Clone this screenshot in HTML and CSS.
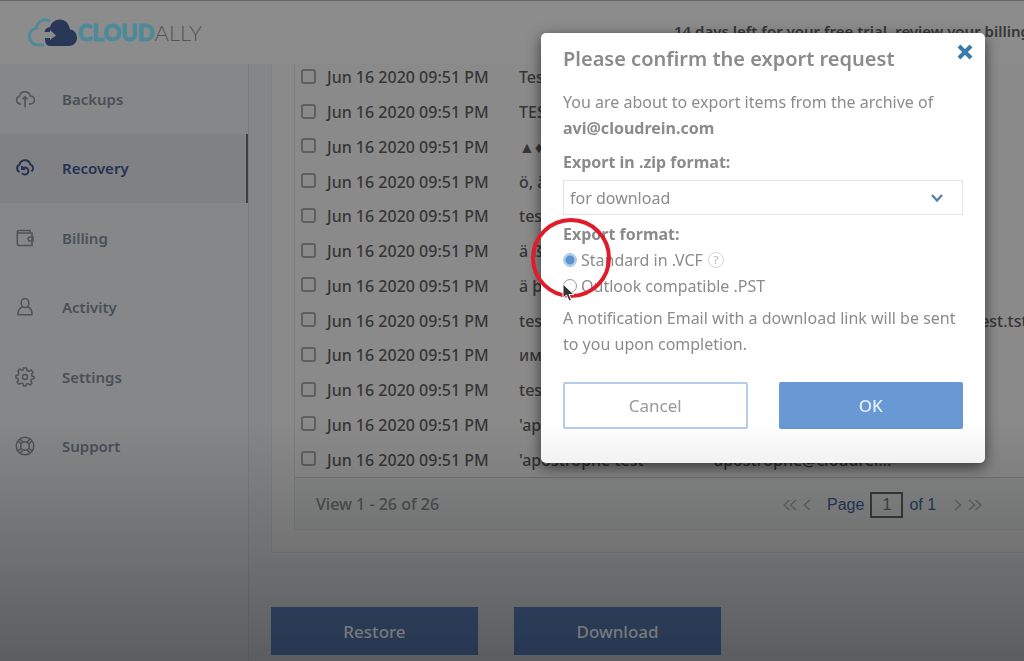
FILE: index.html
```html
<!DOCTYPE html>
<html lang="en">
<head>
    <meta charset="UTF-8">
    <meta name="viewport" content="width=device-width, initial-scale=1.0">
    <title>CloudAlly - Recovery</title>
    <link rel="stylesheet" href="styles.css">
</head>
<body>
    <header class="topbar">
        <a href="#" class="logo" aria-label="CloudAlly">
            <svg width="50" height="30" viewBox="0 0 50 30">
                <path d="M22 3C15 0 9 4 8.500 10C3 11.500 1 15 1.500 19C2 24 6 27 10 27H16" fill="none" stroke="#4d8a99" stroke-width="2.800"/>
                <path d="M21 28H41C46 28 49 24 49 20C49 15 46 12 42 11.500C41 5 37 1.500 32 1.500C27 1.500 23 5 22 9C19 9.500 17 11 16.500 14H22V12L28 17.500L22 22V20H17C17 25 18 27 21 28Z" fill="#2a3858"/>
            </svg>
            <span class="logo-cloud">CLOUD</span><span class="logo-ally">ALLY</span>
        </a>
        <p class="trial">14 days left for your free trial, review your billing</p>
    </header>
    <div class="layout">
        <nav class="sidebar">
            <a href="#"><svg viewBox="0 0 20 20"><path d="M6 15H5A4 4 0 0 1 4.500 7.200A5.500 5.500 0 0 1 15.300 7A4 4 0 0 1 15.500 15H14M10 18.500V8M7.500 10.200L10 7.800L12.500 10.200"/></svg>Backups</a>
            <a href="#" class="active"><svg viewBox="0 0 20 20"><path d="M4.500 14A4 4 0 0 1 4.500 6.700A5.500 5.500 0 0 1 15.300 6.500A4 4 0 0 1 16.500 13.500M7 8V11H10M7.200 10.800A3.500 3.500 0 1 1 7 15"/></svg>Recovery</a>
            <a href="#"><svg viewBox="0 0 20 20"><path d="M3.500 2.500H15V5H3.500A1.200 1.200 0 0 1 3.500 2.500ZM2.300 4V16A1.500 1.500 0 0 0 4 17.500H17V5H15M18 9H15A2 2 0 0 0 15 13H18Z"/></svg>Billing</a>
            <a href="#"><svg viewBox="0 0 20 20"><ellipse cx="10" cy="6" rx="3.800" ry="4.500"/><path d="M7.500 10C4 11.500 3 13 3 17.800H17C17 13 16 11.500 12.500 10"/></svg>Activity</a>
            <a href="#"><svg viewBox="0 0 20 20"><path d="M8.500 1H11.500L12 3.500L14 4.400L16.200 3L18 5.200L16.500 7.500L17 9L19 9.500V11.500L16.800 12L16 14L17 16L15 18L13 16.500L11.500 17L11 19H8.500L8 16.800L6 16L4 17.200L2 15L3.500 13L3 11.500L1 11V8.500L3.300 8L4 6L2.800 4L5 2L7 3.500L8 3.200Z"/><circle cx="10" cy="10" r="2.500"/></svg>Settings</a>
            <a href="#"><svg viewBox="0 0 20 20"><circle cx="10" cy="10" r="8.800"/><circle cx="10" cy="10" r="4.300"/><path d="M3 5L6.300 8M5 3L8 6.300M17 5L13.700 8M15 3L12 6.300M3 15L6.300 12M5 17L8 13.700M17 15L13.700 12M15 17L12 13.700"/></svg>Support</a>
        </nav>
        <main class="content">
            <section class="card">
                <div class="grid">
                    <div class="rows">
                        <table>
                            <tr><td><input type="checkbox" aria-label="Select row"></td><td>Jun 16 2020 09:51 PM</td><td>Test</td><td></td><td></td></tr>
                            <tr><td><input type="checkbox" aria-label="Select row"></td><td>Jun 16 2020 09:51 PM</td><td>TEST</td><td></td><td></td></tr>
                            <tr><td><input type="checkbox" aria-label="Select row"></td><td>Jun 16 2020 09:51 PM</td><td>▲♦</td><td></td><td></td></tr>
                            <tr><td><input type="checkbox" aria-label="Select row"></td><td>Jun 16 2020 09:51 PM</td><td>ö, ä</td><td></td><td></td></tr>
                            <tr><td><input type="checkbox" aria-label="Select row"></td><td>Jun 16 2020 09:51 PM</td><td>test</td><td></td><td></td></tr>
                            <tr><td><input type="checkbox" aria-label="Select row"></td><td>Jun 16 2020 09:51 PM</td><td>ä ß</td><td></td><td></td></tr>
                            <tr><td><input type="checkbox" aria-label="Select row"></td><td>Jun 16 2020 09:51 PM</td><td>ä þ</td><td></td><td></td></tr>
                            <tr><td><input type="checkbox" aria-label="Select row"></td><td>Jun 16 2020 09:51 PM</td><td>test</td><td></td><td>test.tst</td></tr>
                            <tr><td><input type="checkbox" aria-label="Select row"></td><td>Jun 16 2020 09:51 PM</td><td>имя</td><td></td><td></td></tr>
                            <tr><td><input type="checkbox" aria-label="Select row"></td><td>Jun 16 2020 09:51 PM</td><td>test</td><td></td><td></td></tr>
                            <tr><td><input type="checkbox" aria-label="Select row"></td><td>Jun 16 2020 09:51 PM</td><td>'apo</td><td></td><td></td></tr>
                            <tr><td><input type="checkbox" aria-label="Select row"></td><td>Jun 16 2020 09:51 PM</td><td>'apostrophe test</td><td>apostrophe@cloudrei...</td><td></td></tr>
                        </table>
                    </div>
                    <div class="pager">
                        <span class="view">View 1 - 26 of 26</span>
                        <div class="pages">
                            <button aria-label="First page"><svg width="14" height="12" viewBox="0 0 14 12"><path d="M6.500 1L1 6L6.500 11M13 1L7.500 6L13 11"/></svg></button>
                            <button aria-label="Previous page"><svg width="8" height="12" viewBox="0 0 8 12"><path d="M7 1L1.500 6L7 11"/></svg></button>
                            <label for="page">Page</label>
                            <input type="text" id="page" value="1">
                            <span>of 1</span>
                            <button class="next" aria-label="Next page"><svg width="8" height="12" viewBox="0 0 8 12"><path d="M1 1L6.500 6L1 11"/></svg></button>
                            <button aria-label="Last page"><svg width="14" height="12" viewBox="0 0 14 12"><path d="M1 1L6.500 6L1 11M7.500 1L13 6L7.500 11"/></svg></button>
                        </div>
                    </div>
                </div>
            </section>
            <div class="actions">
                <button>Restore</button>
                <button>Download</button>
            </div>
        </main>
    </div>

    <div class="modal" role="dialog" aria-labelledby="modalTitle">
        <button class="close" aria-label="Close"><svg width="16" height="16" viewBox="0 0 16 16"><path d="M2 2L14 14M14 2L2 14"/></svg></button>
        <h2 id="modalTitle">Please confirm the export request</h2>
        <p>You are about to export items from the archive of <strong>avi@cloudrein.com</strong></p>
        <label class="field-label" for="target">Export in .zip format:</label>
        <div class="select">
            <select id="target"><option>for download</option></select>
            <svg width="14" height="10" viewBox="0 0 14 10"><path d="M2 2L7 7.500L12 2"/></svg>
        </div>
        <fieldset>
            <legend>Export format:</legend>
            <div class="option"><input type="radio" name="format" id="vcf" checked><label for="vcf">Standard in .VCF</label><span class="help">?</span></div>
            <div class="option"><input type="radio" name="format" id="pst"><label for="pst">Outlook compatible .PST</label></div>
        </fieldset>
        <p>A notification Email with a download link will be sent to you upon completion.</p>
        <div class="modal-actions">
            <button class="cancel">Cancel</button>
            <button class="ok">OK</button>
        </div>
        <div class="highlight"></div>
        <svg class="cursor" width="14" height="20" viewBox="0 0 14 20"><path d="M1 1V15L4.500 12L7 18L9.500 17L7 11.500H12Z"/></svg>
    </div>
    <div class="shade"></div>
</body>
</html>
```
FILE: styles.css
```css
* {
    box-sizing: border-box;
}
body {
    margin: 0;
    min-height: 100vh;
    overflow: hidden;
    display: flex;
    flex-direction: column;
    font-family: "Noto Sans", "Open Sans", sans-serif;
    font-size: 16px;
    background-color: #848689;
    color: #363636;
}
a {
    color: inherit;
    text-decoration: none;
}
button {
    font: inherit;
    cursor: pointer;
}
.topbar {
    height: 64px;
    flex-shrink: 0;
    display: flex;
    align-items: center;
    padding-left: 28px;
    border-top: 1px solid #666;
    background-color: #8c8c8c;
}
.logo {
    display: flex;
    align-items: center;
    width: 646px;
    flex-shrink: 0;
    font-family: Lato, sans-serif;
    font-size: 22px;
}
.logo-cloud {
    font-weight: 900;
    color: #4d8a99;
    -webkit-text-stroke: 1px #4d8a99;
}
.logo-ally {
    font-weight: 300;
    color: #555;
}
.trial {
    margin: 0;
    padding-bottom: 4px;
    white-space: nowrap;
    font-size: 15px;
    font-weight: 600;
}
.layout {
    flex: 1;
    display: flex;
}
.sidebar {
    width: 249px;
    flex-shrink: 0;
    display: grid;
    grid-template-rows: repeat(6, 1fr);
    padding-bottom: 180px;
    background-color: #858789;
    border-right: 1px solid #7b7c7e;
}
.sidebar a {
    display: flex;
    align-items: center;
    gap: 27px;
    padding-left: 15px;
    font-size: 15px;
    font-weight: 600;
    color: #4b4f57;
}
.sidebar svg {
    width: 20px;
    height: 20px;
    fill: none;
    stroke: #505255;
    stroke-width: 1.500;
}
.sidebar .active {
    background-color: #7f8184;
    border-right: 2px solid #3c3f45;
    color: #26334f;
}
.sidebar .active svg {
    stroke: #26334f;
    stroke-width: 2;
}
.content {
    flex: 1;
    min-width: 0;
    padding-left: 22px;
}
.card {
    padding: 0 0 22px 22px;
    background-color: #8a8a8a;
    border: 1px solid #7f8083;
    border-width: 0 0 1px 1px;
}
.grid {
    border-left: 1px solid #7d7e82;
    border-bottom: 1px solid #818284;
}
/* list is scrolled to its end */
.rows {
    height: 413px;
    overflow: hidden;
    display: flex;
    flex-direction: column;
    justify-content: flex-end;
}
table {
    flex-shrink: 0;
    width: 730px;
    height: 417px;
    table-layout: fixed;
    border-collapse: collapse;
    white-space: nowrap;
}
td {
    padding: 0;
    font-weight: 500;
}
td:nth-child(1) { width: 32px; }
td:nth-child(2) { width: 192px; }
td:nth-child(3) { width: 195px; }
td:nth-child(4) { width: 260px; }
input[type="checkbox"] {
    appearance: none;
    display: block;
    width: 15px;
    height: 15px;
    margin: 0 0 2px 6px;
    border: 2px solid #606060;
    border-radius: 3px;
}
.pager {
    display: flex;
    align-items: center;
    height: 52px;
    padding-left: 21px;
    border-top: 1px solid #747577;
    background-color: #868787;
    color: #505050;
}
.view {
    width: 467px;
    font-weight: 500;
}
.pages {
    display: flex;
    align-items: center;
    gap: 6px;
    padding-top: 2px;
    color: #26385a;
    font-family: "Liberation Sans", Arial, sans-serif;
}
.pages button {
    display: flex;
    padding: 0;
    border: none;
    background: none;
}
.pages label {
    margin-left: 10px;
}
.pages .next {
    margin-left: 12px;
}
.pages svg {
    fill: none;
    stroke: #626466;
    stroke-width: 1.500;
}
.pages input {
    width: 33px;
    height: 26px;
    padding: 0;
    border: 2px solid #3a3a3a;
    background: none;
    font: inherit;
    color: #444;
    text-align: center;
}
.actions {
    display: flex;
    gap: 36px;
    margin-top: 54px;
}
.actions button {
    width: 207px;
    height: 48px;
    border: none;
    background-color: #384f73;
    color: #a3a5a8;
    font-size: 17px;
    font-weight: 500;
}
.modal {
    position: fixed;
    top: 33px;
    left: 541px;
    width: 444px;
    padding: 12px 22px 34px;
    border-radius: 5px;
    background-color: #fff;
    box-shadow: 0 4px 14px rgba(0, 0, 0, 0.6);
    color: #8b8b8b;
    line-height: 26px;
}
.modal h2 {
    margin: 0 0 17px;
    font-size: 20px;
    font-weight: 600;
    line-height: 27px;
}
.modal p {
    margin: 0 0 8px;
}
.close {
    position: absolute;
    top: 11px;
    right: 12px;
    display: flex;
    padding: 0;
    border: none;
    background: none;
}
.close svg {
    fill: none;
    stroke: #3b7ba8;
    stroke-width: 4;
}
.field-label {
    display: block;
    font-weight: 700;
}
.select {
    position: relative;
    margin: 5px 0 6px;
}
.select select {
    appearance: none;
    display: block;
    width: 100%;
    height: 35px;
    padding: 0 6px;
    border: 1px solid #e2e4e4;
    background-color: #fff;
    font: inherit;
    color: #8b8b8b;
}
.select svg {
    position: absolute;
    top: 13px;
    right: 19px;
    fill: none;
    stroke: #5b82a8;
    stroke-width: 2.500;
}
fieldset {
    margin: 0 0 6px;
    padding: 0;
    border: none;
}
legend {
    padding: 0;
    font-weight: 700;
}
.option {
    display: flex;
    align-items: center;
    gap: 4px;
}
.option input {
    appearance: none;
    width: 14px;
    height: 14px;
    margin: 0;
    border: 1px solid #999;
    border-radius: 50%;
}
.option input:checked {
    border-color: #a9c8ea;
    background: radial-gradient(circle, #5e93d1 4px, #b5d0ee 5px);
}
.help {
    width: 16px;
    height: 16px;
    margin-left: 1px;
    border: 1px solid #d5dad8;
    border-radius: 50%;
    font-size: 11px;
    line-height: 14px;
    text-align: center;
    color: #b5bab8;
}
.modal-actions {
    display: flex;
    gap: 31px;
    margin-top: 25px;
}
.modal-actions button {
    flex: 1;
    height: 47px;
    border: 2px solid #b3cdea;
    border-radius: 2px;
    background-color: #fff;
    color: #999;
    font-size: 17px;
}
.modal-actions .ok {
    border-color: #6899d4;
    background-color: #6899d4;
    color: #e4eefa;
    font-weight: 500;
}
.highlight {
    position: absolute;
    top: 185px;
    left: -10px;
    width: 80px;
    height: 80px;
    border: 4px solid #e01b2b;
    border-radius: 50%;
    pointer-events: none;
}
.cursor {
    position: absolute;
    top: 250px;
    left: 21px;
    fill: #333;
    stroke: #fff;
}
.shade {
    position: fixed;
    left: 0;
    right: 0;
    bottom: 0;
    height: 240px;
    background: linear-gradient(rgba(0, 0, 0, 0), rgba(0, 0, 0, 0.15) 50%, rgba(0, 0, 0, 0.3));
    pointer-events: none;
}
```
